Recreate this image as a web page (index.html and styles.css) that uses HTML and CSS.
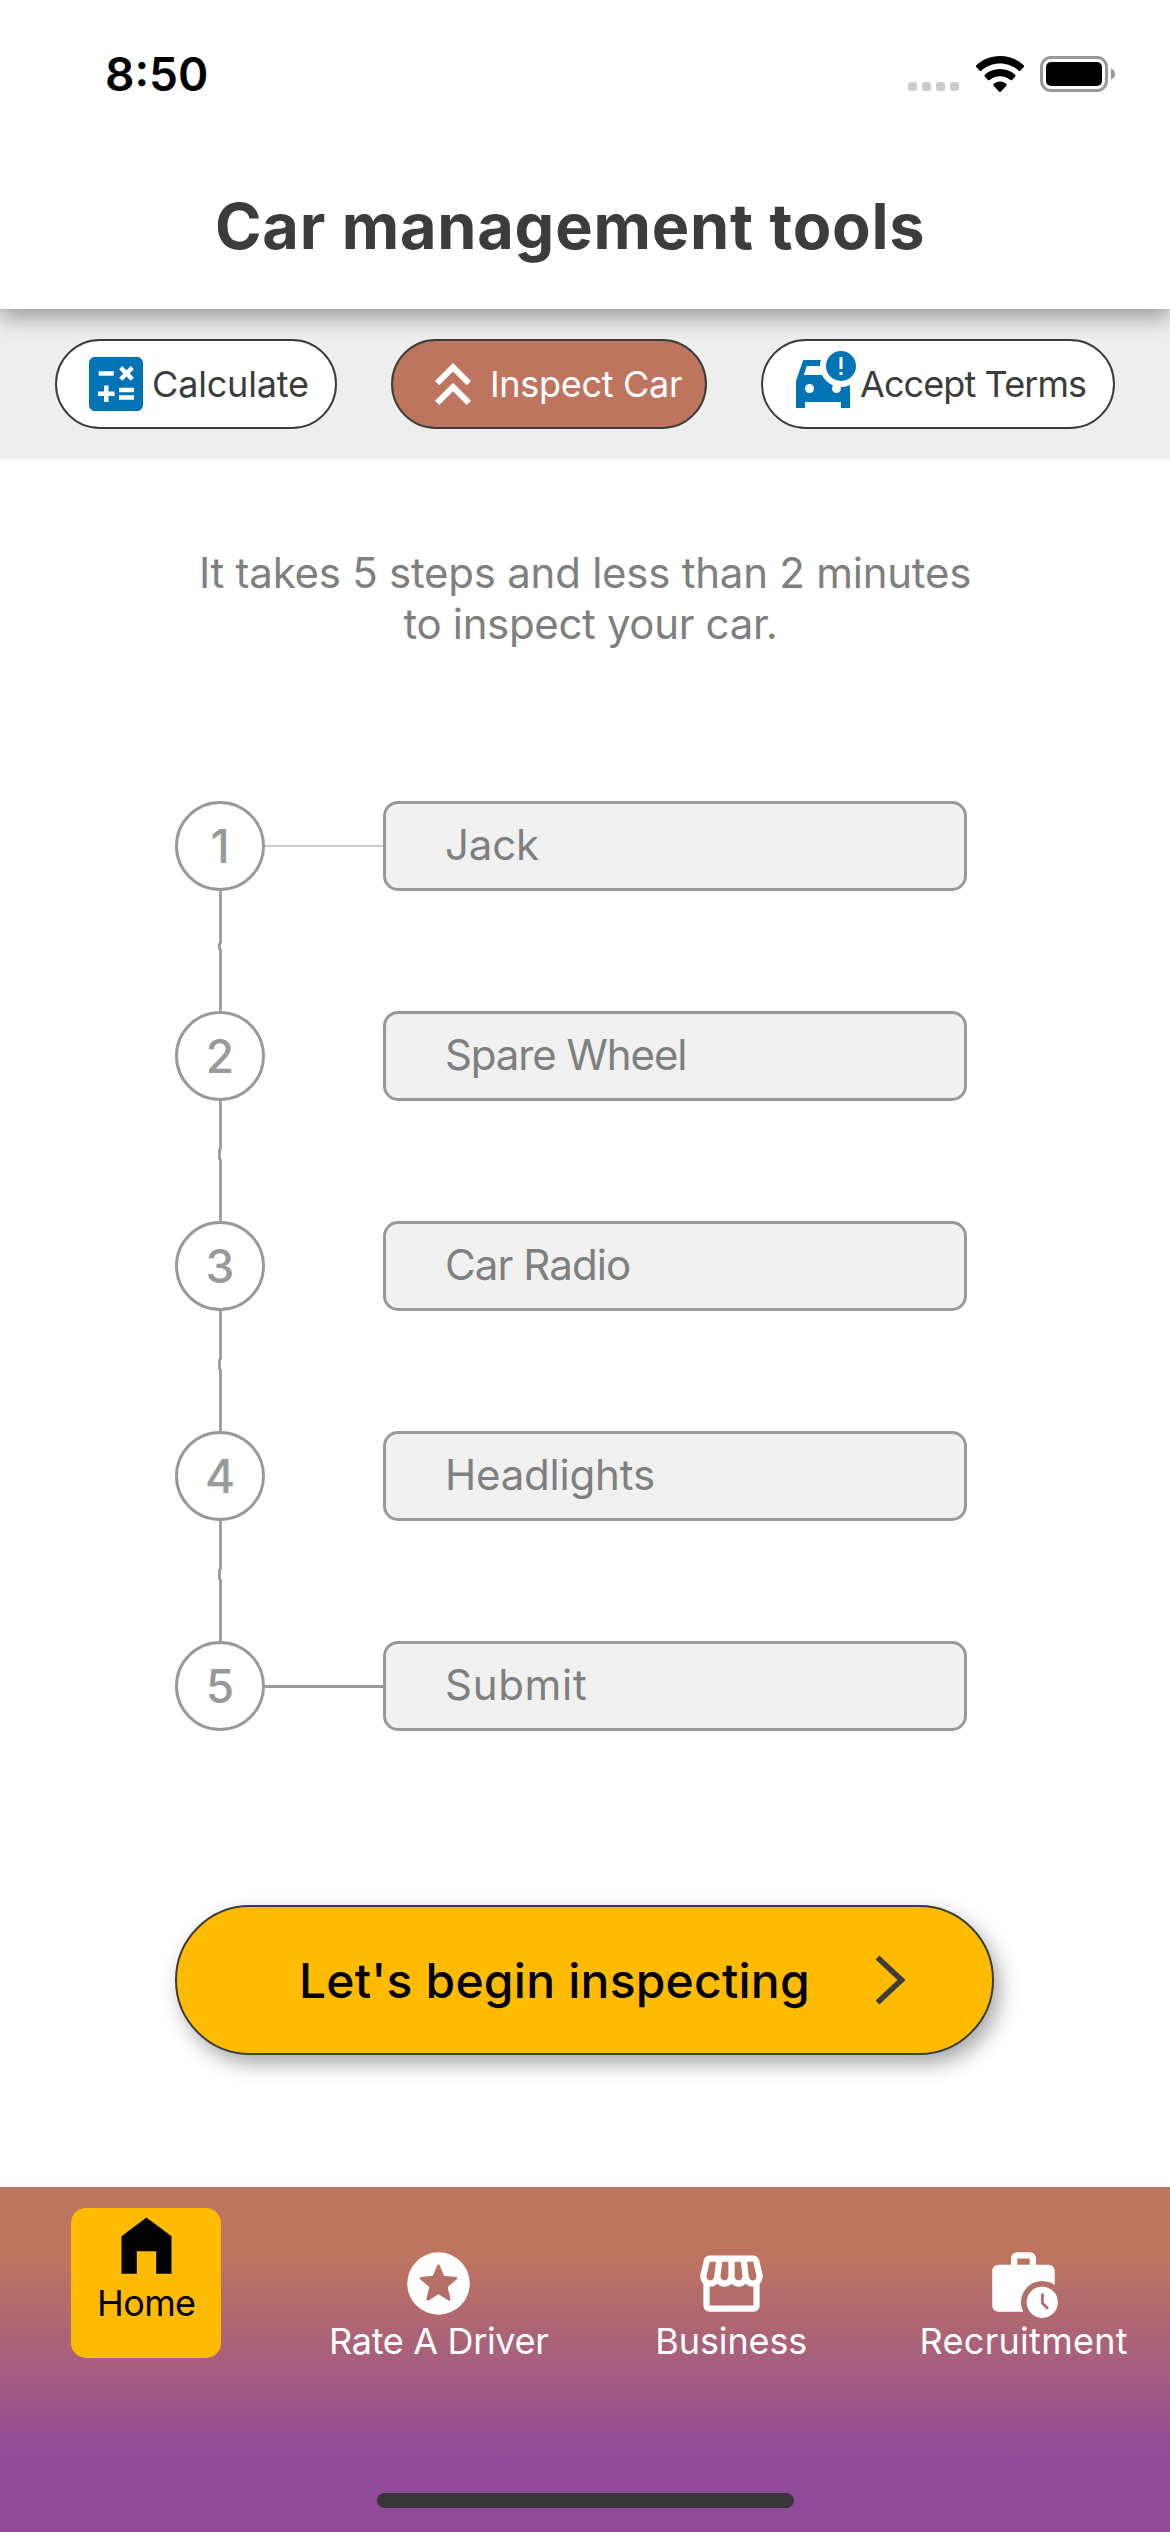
FILE: index.html
```html
<!DOCTYPE html>
<html lang="en">
<head>
<meta charset="utf-8">
<title>Car management tools</title>
<link rel="stylesheet" href="styles.css">
</head>
<body>
<div class="screen">
  <header class="header">
    <div class="status">
      <span class="time">8:50</span>
      <div class="status-icons">
        <div class="dots"><i></i><i></i><i></i><i></i></div>
        <svg class="wifi" width="50" height="38" viewBox="0 0 50 38">
          <path d="M25 1C15.600 1 7.300 4.500 1.300 10.300c-.5.500-.5 1.200 0 1.700l3.300 3.700c.5.500 1.200.5 1.700 0C11.300 11.200 17.800 8.500 25 8.500s13.700 2.700 18.700 7.200c.5.500 1.200.5 1.700 0l3.300-3.700c.5-.5.5-1.200 0-1.700C42.700 4.500 34.400 1 25 1z"/>
          <path d="M25 14c-5.900 0-11.200 2.200-15.200 5.800-.5.500-.5 1.200 0 1.700l3.100 3.400c.5.500 1.200.5 1.700 0 2.800-2.300 6.400-3.700 10.400-3.700s7.600 1.400 10.400 3.700c.5.500 1.200.5 1.700 0l3.100-3.400c.5-.5.5-1.200 0-1.700C36.200 16.200 30.900 14 25 14z"/>
          <path d="M25 26.500c-2.500 0-4.700.9-6.400 2.400-.5.500-.5 1.100-.1 1.600l5.500 6.100c.6.600 1.400.6 2 0l5.500-6.100c.4-.5.4-1.100-.1-1.600-1.700-1.500-3.900-2.400-6.400-2.400z"/>
        </svg>
        <svg class="battery" width="76" height="36" viewBox="0 0 76 36">
          <rect x="1.500" y="1.500" width="65" height="33" rx="9.500" fill="none" stroke="#999" stroke-width="3"/>
          <rect x="6" y="6" width="56" height="24" rx="5"/>
          <path d="M71 12.500c5.300 2 5.300 9 0 11z" fill="#999"/>
        </svg>
      </div>
    </div>
    <h1 class="title">Car management tools</h1>
  </header>

  <div class="tabs">
    <button class="tab tab-calc">
      <svg width="72" height="72" viewBox="0 0 24 24"><path fill="#0273b5" fill-rule="evenodd" d="M19 3H5c-1.100 0-2 .9-2 2v14c0 1.100.9 2 2 2h14c1.100 0 2-.9 2-2V5c0-1.100-.9-2-2-2zm-5.970 4.060L14.090 6l1.410 1.410L16.910 6l1.060 1.060-1.410 1.410 1.410 1.410-1.060 1.060-1.410-1.400-1.410 1.410-1.060-1.060 1.410-1.410-1.410-1.420zm-6.780.66h5v1.500h-5v-1.500zM11.500 16h-2v2H8v-2H6v-1.500h2v-2h1.500v2h2V16zm6.500 1.250h-5v-1.500h5v1.500zm0-2.500h-5v-1.500h5v1.500z"/></svg>
      <span>Calculate</span>
    </button>
    <button class="tab tab-inspect active">
      <svg width="72" height="72" viewBox="0 0 24 24"><path fill="#fff" d="M6 17.590 7.410 19 12 14.420 16.590 19 18 17.590l-6-6zM6 11l1.410 1.410L12 7.830l4.590 4.580L18 11l-6-6z"/></svg>
      <span>Inspect Car</span>
    </button>
    <button class="tab tab-terms">
      <svg width="72" height="72" viewBox="0 0 24 24">
        <path fill="#0273b5" d="M5.400 4h6l-.3 2H6.600l-1 3H16v2h5v9h-3v-2H6v2H3v-9z"/>
        <circle cx="18" cy="6" r="7" fill="#fff"/>
        <circle cx="7.500" cy="13.500" r="1.500" fill="#fff"/><circle cx="16.500" cy="13.500" r="1.500" fill="#fff"/>
        <circle cx="18" cy="6" r="5" fill="#0273b5"/>
        <path d="M17.500 3h1v4h-1zM17.500 8h1v1h-1z" fill="#fff"/>
      </svg>
      <span>Accept Terms</span>
    </button>
  </div>

  <main class="content">
    <p class="intro">It takes 5 steps and less than 2 minutes<br><span class="second">to inspect your car.</span></p>

    <ol class="steps">
      <li class="step"><span class="num">1</span><span class="link light"></span><span class="box jack">Jack</span></li>
      <li class="joint"><svg width="4" height="120" viewBox="0 0 4 120"><path d="M2.500 0V52L1.500 53V58L2.500 59V120"/></svg></li>
      <li class="step"><span class="num">2</span><span class="link none"></span><span class="box wheel">Spare Wheel</span></li>
      <li class="joint"><svg width="4" height="120" viewBox="0 0 4 120"><path d="M2.500 0V48L1.500 49V58L2.500 59V120"/></svg></li>
      <li class="step"><span class="num">3</span><span class="link none"></span><span class="box radio">Car Radio</span></li>
      <li class="joint"><svg width="4" height="120" viewBox="0 0 4 120"><path d="M2.500 0V48L1.500 49V58L2.500 59V120"/></svg></li>
      <li class="step"><span class="num">4</span><span class="link none"></span><span class="box lights">Headlights</span></li>
      <li class="joint"><svg width="4" height="120" viewBox="0 0 4 120"><path d="M2.500 0V48L1.500 49V58L2.500 59V120"/></svg></li>
      <li class="step"><span class="num">5</span><span class="link"></span><span class="box submit">Submit</span></li>
    </ol>

    <button class="begin">
      <span>Let's begin inspecting</span>
      <svg width="31" height="50" viewBox="0 0 31 50"><path d="M2.500 2.500 26.500 25 2.500 47.500" fill="none" stroke="#3c3c3c" stroke-width="5.500"/></svg>
    </button>
  </main>

  <nav class="nav">
    <div class="nav-items">
      <a class="nav-item current"><span class="tile">
        <svg width="75" height="75" viewBox="0 0 24 24"><path d="M4 21V9l8-6 8 6v12h-4.900v-7.200H8.900V21z"/></svg>
        <span class="home">Home</span></span></a>
      <a class="nav-item">
        <svg width="75" height="75" viewBox="0 0 24 24"><path fill="#fff" fill-rule="evenodd" d="M12 2a10 10 0 1 0 0 20 10 10 0 0 0 0-20zm-.35 4.100c.15-.36.55-.36.7 0l1.450 3.450 3.800.35c.4.040.55.45.25.72l-2.900 2.530.88 3.800c.1.400-.25.65-.6.450L12 15.450 8.770 17.400c-.35.200-.7-.050-.6-.450l.88-3.800-2.900-2.530c-.3-.27-.15-.68.25-.72l3.800-.35z"/></svg>
        <span class="rate">Rate A Driver</span></a>
      <a class="nav-item">
        <svg width="75" height="75" viewBox="0 0 24 24"><path fill="#fff" d="M21.900 8.890l-1.050-4.370c-.22-.9-1-1.520-1.910-1.520H5.050c-.9 0-1.690.63-1.900 1.520L2.100 8.890c-.24 1.020-.02 2.060.62 2.880.08.11.19.19.28.29V19c0 1.100.9 2 2 2h14c1.100 0 2-.9 2-2v-6.940c.09-.09.2-.18.28-.28.64-.82.87-1.870.62-2.890zm-2.990-3.900l1.050 4.370c.1.420.01.84-.25 1.170-.14.18-.44.47-.94.47-.61 0-1.140-.49-1.210-1.140L16.980 5l1.930-.01zM13 5h1.960l.54 4.520c.05.39-.07.78-.33 1.070-.22.26-.54.41-.95.41-.67 0-1.220-.59-1.220-1.310V5zM8.490 9.520L9.040 5H11v4.690c0 .72-.55 1.310-1.290 1.310-.34 0-.65-.15-.89-.41-.25-.29-.37-.68-.33-1.070zm-4.450-.16L5.050 5h1.970l-.58 4.860c-.08.65-.6 1.140-1.210 1.140-.49 0-.8-.29-.93-.47-.27-.32-.36-.75-.26-1.170zM5 19v-6.030c.08.010.15.030.23.030.87 0 1.660-.36 2.240-.95.6.6 1.400.95 2.310.95.870 0 1.650-.36 2.230-.93.590.57 1.390.93 2.290.93.840 0 1.640-.35 2.240-.95.580.59 1.370.95 2.240.95.080 0 .15-.02.23-.03V19H5z"/></svg>
        <span class="business">Business</span></a>
      <a class="nav-item">
        <svg width="75" height="75" viewBox="0 0 24 24">
          <mask id="bag"><rect width="24" height="24" fill="#fff"/><circle cx="18" cy="18" r="6.800" fill="#000"/></mask>
          <path mask="url(#bag)" fill="#fff" fill-rule="evenodd" d="M8 6V4c0-1.100.9-2 2-2h4c1.100 0 2 .9 2 2v2h4c1.100 0 2 .9 2 2v11c0 1.100-.9 2-2 2H4c-1.100 0-2-.9-2-2V8c0-1.100.9-2 2-2zm2 0h4V4h-4z"/>
          <path fill="#fff" fill-rule="evenodd" d="M18 13a5 5 0 1 0 0 10 5 5 0 0 0 0-10zm-.4 2.200h.9v2.900l1.650 1.650-.65.650-1.900-1.900z"/>
        </svg>
        <span class="recruit">Recruitment</span></a>
    </div>
    <div class="indicator"></div>
  </nav>
</div>
</body>
</html>
```
FILE: styles.css
```css
* { box-sizing: border-box; }
body { margin: 0; font-family: Inter, Roboto, sans-serif; background: #fff; color: #3c3c3c; }
button { font: inherit; margin: 0; padding: 0; cursor: pointer; }
svg { display: block; flex: none; }

.screen { width: 1170px; height: 2532px; display: flex; flex-direction: column; overflow: hidden; }

.header { height: 309px; flex: none; background: #fff; position: relative; box-shadow: 0 9px 20px rgba(0, 0, 0, .34); }
.status { height: 148px; display: flex; justify-content: space-between; align-items: center; padding: 0 54px 0 105px; color: #000; }
.time { font-size: 46px; font-weight: 600; line-height: 56px; }
.status-icons { display: flex; align-items: center; }
.dots { display: flex; gap: 5px; align-self: flex-end; margin-bottom: 2px; }
.dots i { width: 9px; height: 9px; border-radius: 3px; background: #ccc; }
.wifi { margin-left: 16px; }
.battery { margin-left: 15px; }
.title { margin: 40px 0 0 215px; font-size: 63px; font-weight: 700; line-height: 76px; letter-spacing: .75px; color: #3c3c3c; }

.tabs { height: 150px; flex: none; background: #eee; display: flex; justify-content: space-between; align-items: center; padding: 0 55px; }
.tab { height: 90px; border: 2px solid #3c3c3c; border-radius: 45px; background: #fff; color: #3c3c3c; display: flex; align-items: center; font-size: 36px; line-height: 44px; white-space: nowrap; }
/* keeps the pills above the header's shadow */
.tab { position: relative; }
.tab-calc { width: 282px; padding-left: 23px; letter-spacing: -.17px; }
.tab-inspect { width: 316px; padding-left: 24px; letter-spacing: -.3px; }
.tab-inspect span { margin-left: 1px; }
.tab-terms { width: 354px; padding-left: 24px; letter-spacing: -.9px; }
.tab-terms span { margin-left: 1px; }
.tab.active { background: #bd7560; color: #fff; }

.content { flex: 1; display: flex; flex-direction: column; }
.intro { margin: 88px 0 0; text-align: center; font-size: 42px; line-height: 51px; letter-spacing: -.25px; color: #7f7f7f; }
.second { padding-left: 11px; letter-spacing: -.35px; }

.steps { list-style: none; margin: 152px 0 0 175px; padding: 0; }
.step { display: flex; align-items: center; height: 90px; }
.num { width: 90px; height: 90px; border: 3px solid #999; border-radius: 50%; display: flex; align-items: center; justify-content: center; font-size: 46px; font-weight: 500; color: #999; }
.link { width: 118px; height: 3px; background: #999; }
.link.light { height: 2px; background: #ccc; }
.link.none { background: none; }
.box { width: 584px; height: 90px; border: 3px solid #999; border-radius: 15px; background: #f1f1f1; padding: 0 0 3px 59px; display: flex; align-items: center; font-size: 42px; color: #7f7f7f; }
.joint { height: 120px; padding-left: 43px; }
.joint path { fill: none; stroke: #999; stroke-width: 2.700px; }
.jack, .lights { letter-spacing: -.2px; }
.wheel { letter-spacing: -1.100px; }
.radio { letter-spacing: -.9px; }
.submit { letter-spacing: .7px; }

.begin { width: 819px; height: 150px; margin: 174px 0 0 175px; padding-left: 122px; border: 2px solid #3c3c3c; border-radius: 75px; background: #fb0; color: #000; display: flex; align-items: center; font-size: 48px; font-weight: 500; letter-spacing: .22px; box-shadow: 6px 9px 20px rgba(0, 0, 0, .34); }
.begin span { width: 576px; text-align: left; }

.nav { height: 345px; flex: none; background: linear-gradient(#bd7560 20%, #914999 80%); color: #fff; display: flex; flex-direction: column; justify-content: space-between; align-items: center; padding-bottom: 24px; }
.nav-items { width: 1170px; display: grid; grid-template-columns: repeat(4, 1fr); }
.nav-item { display: flex; flex-direction: column; align-items: center; padding-top: 59px; font-size: 36px; line-height: 40px; white-space: nowrap; }
.nav-item.current { padding-top: 21px; color: #000; }
.tile { width: 150px; height: 150px; border-radius: 15px; background: #fb0; display: flex; flex-direction: column; align-items: center; }
.home { letter-spacing: -.6px; }
.rate { letter-spacing: -.33px; }
.business { letter-spacing: -.1px; }
.recruit { letter-spacing: .3px; }
.indicator { width: 417px; height: 15px; border-radius: 8px; background: #363636; }
```
